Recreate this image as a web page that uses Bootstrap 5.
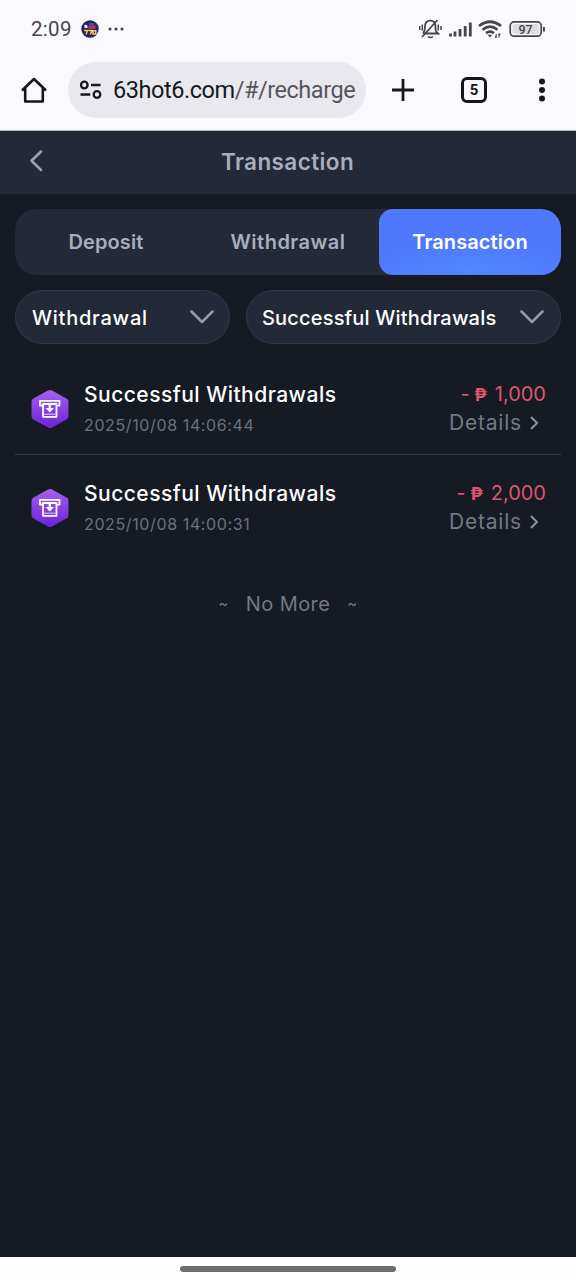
<!DOCTYPE html>
<html lang="en">
<head>
<meta charset="utf-8">
<meta name="viewport" content="width=device-width, initial-scale=1">
<title>Transaction</title>
<link href="https://cdn.jsdelivr.net/npm/bootstrap@5.3.0/dist/css/bootstrap.min.css" rel="stylesheet">
<style>
  body { background: #161a23; font-family: Inter, "Open Sans", sans-serif; color: #fff; height: 1280px; overflow: hidden; }
  svg { display: block; flex: none; }
  .chrome-top { background: #f9f9fe; height: 131px; border-bottom: 1px solid #b5bac3; font-family: Roboto, sans-serif; color: #17181d; }
  .status-row { height: 58px; padding: 0 31px; color: #45464b; }
  .clock { font-size: 20.5px; letter-spacing: .3px; width: 50px; }
  .url-row { height: 64px; padding-left: 20px; }
  .url-pill { width: 298px; height: 56px; background: #e8e8ee; padding-left: 10px; margin-left: 20px; }
  .url-text { font-size: 23.5px; width: 244px; margin-left: 9px; letter-spacing: -.45px; padding-top: 1px; }
  .url-text span { color: #55565c; }
  .tab-count { width: 26px; height: 26px; border: 3px solid #17181d; border-radius: 6px; font-size: 15px; line-height: 1; margin-left: 46px; }
  .page-head { height: 63px; background: #232936; color: #a9aebc; padding: 0 0 3px 27px; }
  .page-head h1 { font-size: 22.5px; font-weight: 600; letter-spacing: .4px; margin-left: 176px; }
  .type-tabs { height: 66px; margin: 15px 15px 0; background: #232936; border-radius: 21px; }
  .type-tabs .nav-link { border-radius: 14px 20px 20px 14px; color: #a9aebc; font-size: 20px; font-weight: 600; letter-spacing: .1px; padding: 0; line-height: 66px; }
  .type-tabs .nav-link.wide { letter-spacing: .5px; }
  .type-tabs .nav-link.active { color: #fff; background: radial-gradient(ellipse 65% 65% at 50% 110%, #528aff, #4f78ff); }
  .filters { margin: 15px 15px 0; gap: 16px; }
  .pick { height: 54px; background: #232936; border: 1px solid #323846; color: #fff; font-size: 20px; font-weight: 500; padding: 0 16px 0 15px; border-radius: 28px; letter-spacing: .18px; }
  .pick.wide { letter-spacing: .75px; padding: 0 15px 0 16px; }
  .pick span { padding-top: 1px; }
  .records { margin: 11px 15px 0; }
  .record { height: 99px; padding: 0 15px 0 16px; }
  .record + .record { border-top: 1px solid #353a46; }
  .record + .record > * { margin-top: -1px; }
  .rec-icon { padding-top: 34px; }
  .rec-body { margin-left: 15px; padding-top: 25px; }
  .rec-title { font-size: 21px; line-height: 30px; font-weight: 500; letter-spacing: .48px; }
  .rec-date { font-size: 16px; line-height: 24px; margin-top: 3px; color: #6b717d; letter-spacing: .62px; }
  .rec-side { padding-top: 25px; }
  .amount { font-size: 20px; line-height: 28px; color: #dc5571; }
  .amount b { margin: 0 2px 0 -1px; font-size: 18px; }
  .details { font-size: 21px; line-height: 28px; color: #737985; padding-right: 7px; gap: 7px; letter-spacing: .8px; }
  .no-more { color: #737985; font-size: 20px; margin-top: 36px; line-height: 30px; gap: 17px; letter-spacing: .4px; }
  .no-more small { font-size: 15px; }
  .home-bar { height: 23px; background: #fefefe; padding-top: 9px; }
  .home-bar div { width: 216px; height: 6px; background: #6d6d6d; border-radius: 3px; }
</style>
</head>
<body class="d-flex flex-column">
<svg width="0" height="0" class="position-absolute">
  <defs>
    <linearGradient id="violet" x1="0" y1="0" x2="0" y2="1"><stop offset="0" stop-color="#a660ef"/><stop offset="1" stop-color="#6c22d8"/></linearGradient>
    <symbol id="atm" viewBox="0 0 38 40">
      <path d="M17 1.600q2-1.100 4 0L35.500 9.500q2 1.100 2 3.300v14.400q0 2.200-2 3.300L21 38.400q-2 1.100-4 0L2.500 30.500q-2-1.100-2-3.300V12.800q0-2.200 2-3.300z" fill="url(#violet)"/>
      <g fill="none" stroke="#fff" stroke-width="1.800" stroke-linejoin="round">
        <path d="M11.500 16.600H9v-4.800h19.500v4.800H26M12 15h13.500v12.800H12z"/>
        <path d="M13 25.200h11.500" stroke-width="1.100" opacity=".7"/>
      </g>
      <path d="M17.600 15.800h2.300v3.200h3.200L18.750 23.500 14.400 19h3.200z" fill="#fff"/>
    </symbol>
    <symbol id="chev" viewBox="0 0 24 14"><path d="M1.500 1.500 12 12 22.500 1.500" fill="none" stroke="#979ba5" stroke-width="2.500" stroke-linecap="round" stroke-linejoin="round"/></symbol>
    <symbol id="next" viewBox="0 0 10 16"><path d="M2 2l6 6-6 6" fill="none" stroke="#8b909a" stroke-width="2.100"/></symbol>
  </defs>
</svg>

<header class="chrome-top flex-shrink-0">
  <div class="status-row d-flex align-items-center">
    <span class="clock">2:09</span>
    <svg width="18" height="18" viewBox="0 0 18 18">
      <circle cx="9" cy="9" r="8.700" fill="#24225f"/>
      <path d="M3.500 4.500l3 1v2.500h-3z" fill="#eee"/><path d="M8 5.500h6.500v3.200H7z" fill="#b93a58"/><path d="M8 3h5v2H8z" fill="#3159c4"/>
      <path d="M3 10.500h3.500L5 14.500M7.500 10.500H11L9.300 14.500M12 10.800h2.800v3.200H12z" fill="none" stroke="#f2cf5d" stroke-width="1.500"/>
    </svg>
    <svg class="ms-2" width="18" height="6" viewBox="0 0 18 6" fill="#45464b"><circle cx="3" cy="3" r="1.600"/><circle cx="9" cy="3" r="1.600"/><circle cx="15" cy="3" r="1.600"/></svg>
    <svg class="ms-auto" width="127" height="22" viewBox="418 18 127 22" fill="none" stroke="#45464b" stroke-width="1.800">
      <path d="M423.500 33.500h14.500c-2.500-2-2.500-3-2.500-6.500 0-4-2-6.400-5.200-6.400S425 23 425 27c0 3-.2 4.500-2 6.500M422 37l15.500-17"/>
      <path d="M428 36.500q2.500 2 5 0M419.700 26v4M422.300 24.500v6M438.300 24.500v6M441 26v4" stroke-width="1.500"/>
      <path d="M450.500 33.500v3M455 31.500v5M460 29v7.500M465.200 26v10.500M470.300 22.500v14" stroke-width="2.800"/>
      <path d="M479 26q11-8.500 22 0M482.500 29.700q7.500-6 15 0M486 33.200q4-3 8 0" stroke-width="2.700"/>
      <path d="M487.500 34.800h4.800l-2.400 2.800z" fill="#45464b" stroke="none"/><path d="M496.200 34v4M499 33.500v4M495 36.500l1.200 1.500M499 33.500l1.300 1.500" stroke-width="1.200"/>
      <rect x="510.200" y="21.900" width="31" height="14.300" rx="4" stroke-width="1.700"/><rect x="512.500" y="24" width="26.500" height="10" rx="2" fill="#dcdce1" stroke="none"/>
      <path d="M543.900 27v4.500" stroke-width="2"/>
      <text x="525.500" y="33.600" text-anchor="middle" font-family="Roboto, sans-serif" font-size="12.500" font-weight="500" fill="#45464b" stroke="none">97</text>
    </svg>
  </div>
  <div class="url-row d-flex align-items-center">
    <svg width="28" height="28" viewBox="0 0 28 28" fill="none" stroke="#17181d" stroke-width="2.600" stroke-linejoin="round"><path d="M2 14.500 14 3l12 11.500M5.200 11.700V25.500h17.600V11.700"/></svg>
    <div class="url-pill rounded-pill d-flex align-items-center">
      <svg width="26" height="22" viewBox="0 0 26 22" fill="none" stroke="#17181d" stroke-width="2.300"><circle cx="6.300" cy="6" r="3.300"/><path d="M13 6h9.500M2.500 15.500h9.800"/><circle cx="19" cy="15.500" r="3.300"/></svg>
      <div class="url-text text-nowrap overflow-hidden">63hot6.com<span>/#/recharge</span></div>
    </div>
    <svg width="24" height="24" viewBox="0 0 24 24" stroke="#17181d" stroke-width="2.800" style="margin-left:25px"><path d="M12 1v22M1 12h22"/></svg>
    <div class="tab-count d-flex align-items-center justify-content-center fw-bold">5</div>
    <svg width="8" height="24" viewBox="0 0 8 24" fill="#17181d" style="margin-left:51px"><circle cx="4" cy="3.500" r="3"/><circle cx="4" cy="12" r="3"/><circle cx="4" cy="20.500" r="3"/></svg>
  </div>
</header>

<main class="flex-grow-1 overflow-hidden">
  <div class="page-head d-flex align-items-center">
    <svg width="18" height="24" viewBox="0 0 18 24" fill="none" stroke="#9fa3a9" stroke-width="2.600" stroke-linecap="round" stroke-linejoin="round"><path d="M14 2.500 4.500 11.800 14 21"/></svg>
    <h1 class="mb-0">Transaction</h1>
  </div>
  <nav class="type-tabs nav nav-pills nav-justified">
    <a class="nav-link" href="#">Deposit</a>
    <a class="nav-link wide" href="#">Withdrawal</a>
    <a class="nav-link active" href="#">Transaction</a>
  </nav>
  <div class="filters d-flex">
    <button class="pick wide btn d-flex align-items-center justify-content-between" style="width:215px"><span>Withdrawal</span><svg width="24" height="14"><use href="#chev"/></svg></button>
    <button class="pick btn d-flex align-items-center justify-content-between flex-grow-1"><span>Successful Withdrawals</span><svg width="24" height="14"><use href="#chev"/></svg></button>
  </div>
  <div class="records">
    <div class="record d-flex">
      <div class="rec-icon"><svg width="38" height="40"><use href="#atm"/></svg></div>
      <div class="rec-body"><div class="rec-title">Successful Withdrawals</div><div class="rec-date">2025/10/08 14:06:44</div></div>
      <div class="rec-side ms-auto text-end"><div class="amount">- <b>₱</b> 1,000</div><div class="details d-flex align-items-center justify-content-end">Details <svg width="10" height="16"><use href="#next"/></svg></div></div>
    </div>
    <div class="record d-flex">
      <div class="rec-icon"><svg width="38" height="40"><use href="#atm"/></svg></div>
      <div class="rec-body"><div class="rec-title">Successful Withdrawals</div><div class="rec-date">2025/10/08 14:00:31</div></div>
      <div class="rec-side ms-auto text-end"><div class="amount">- <b>₱</b> 2,000</div><div class="details d-flex align-items-center justify-content-end">Details <svg width="10" height="16"><use href="#next"/></svg></div></div>
    </div>
  </div>
  <div class="no-more d-flex justify-content-center align-items-center"><small>~</small><span>No More</span><small>~</small></div>
</main>
<footer class="home-bar d-flex justify-content-center flex-shrink-0"><div></div></footer>
<script src="https://cdn.jsdelivr.net/npm/bootstrap@5.3.0/dist/js/bootstrap.bundle.min.js"></script>
</body>
</html>
